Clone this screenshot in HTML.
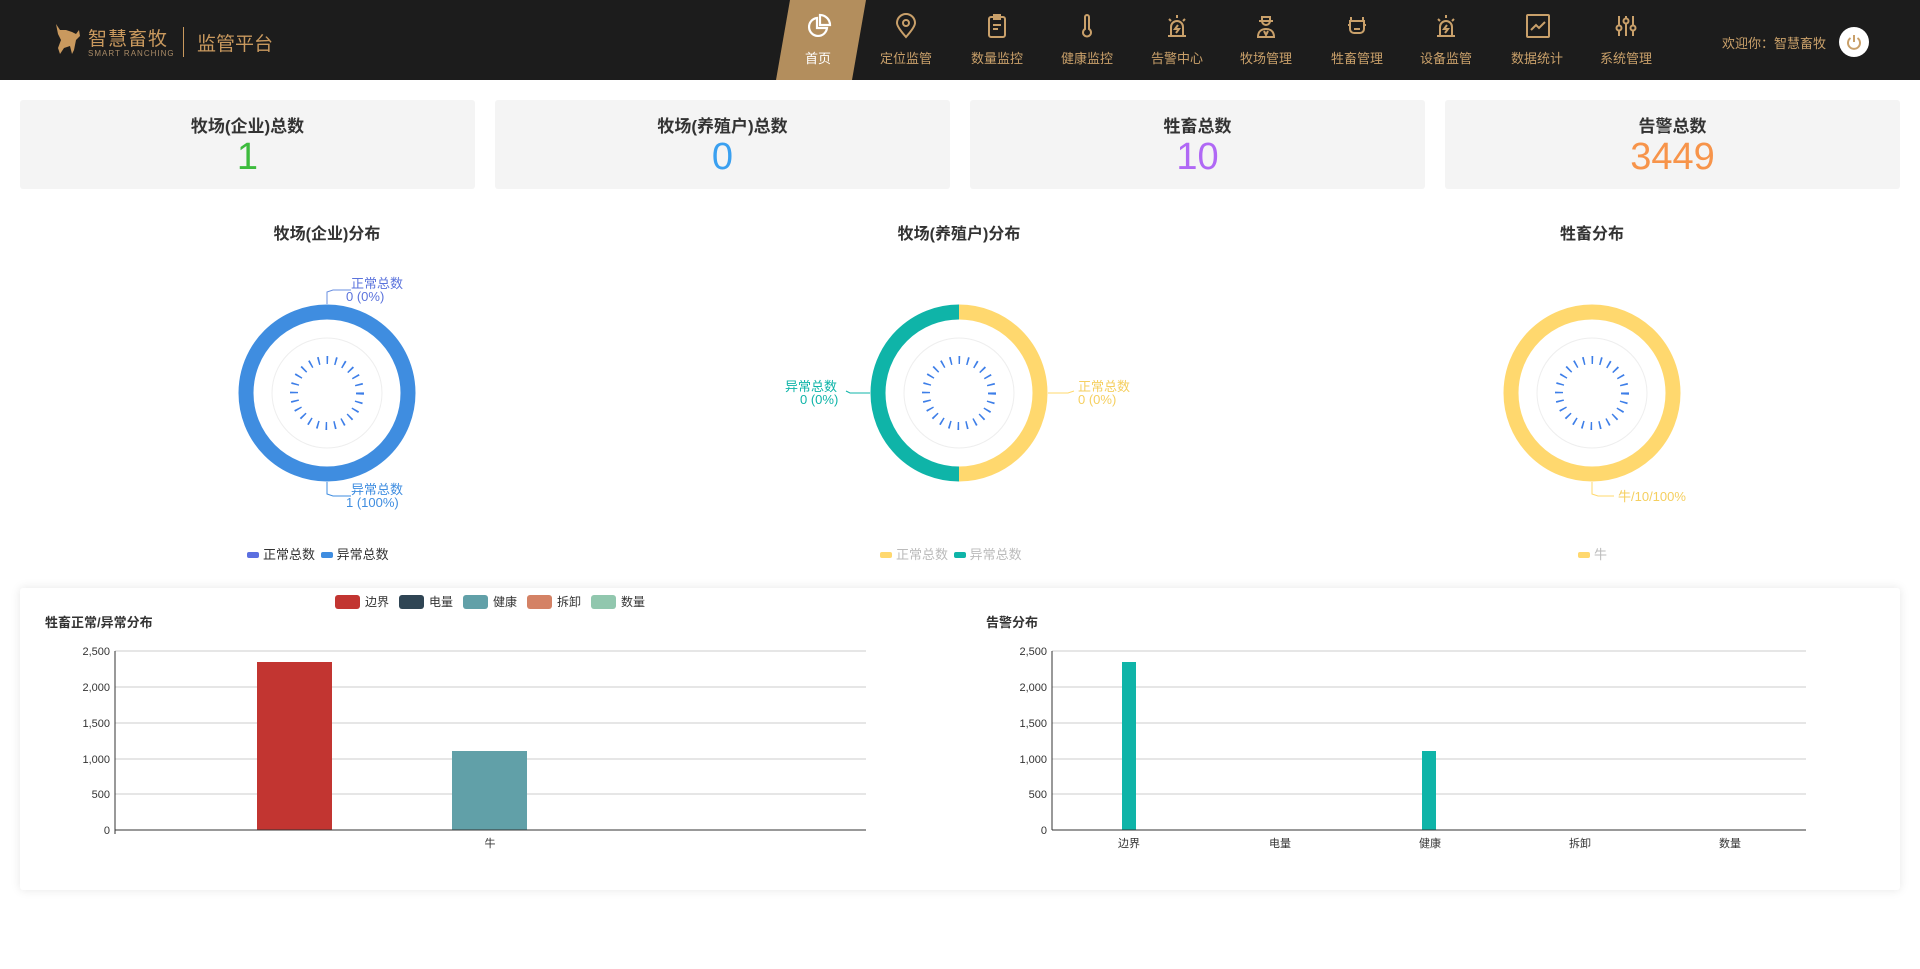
<!DOCTYPE html>
<html><head><meta charset="utf-8"><style>
*{margin:0;padding:0;box-sizing:border-box}
body{width:1920px;height:969px;background:#fff;font-family:"Liberation Sans","Noto Sans CJK SC",sans-serif;position:relative;overflow:hidden;color:#333}
.hdr{position:absolute;left:0;top:0;width:1920px;height:80px;background:#1c1c1c}
.a{position:absolute}
.nav{position:absolute;top:0;height:80px;width:90px;text-align:center;color:#c9a06a;font-size:13px}
.nav svg{position:absolute;left:33px;top:13px}
.nav span{position:absolute;left:0;width:100%;top:48px}
.card{position:absolute;top:100px;width:455px;height:89px;background:#f4f4f4;border-radius:3px;text-align:center}
.card .t{font-size:17px;font-weight:bold;color:#333;margin-top:12px}
.card .n{font-size:38px;line-height:40px;margin-top:0}
.ct{position:absolute;top:220px;font-size:16px;font-weight:bold;color:#333;width:300px;text-align:center}
.lg{position:absolute;top:544px;font-size:13px}
.mk{display:inline-block;width:12px;height:6px;border-radius:2px;vertical-align:middle;margin:0 4px 2px 0}
</style></head><body>
<div class="hdr"></div>
<svg class="a" style="left:52px;top:22px" width="32" height="34" viewBox="0 0 32 34"><path d="M4 2 L8 8 L14 8 L20 10 L24 12 L27 8 L28 14 L24 18 L22 28 L20 32 L18 24 L12 26 L8 32 L6 26 L9 18 L6 12 Z" fill="#c9995e"/></svg>
<div class="a" style="left:88px;top:24px;font-size:19px;color:#c9995e;letter-spacing:1px">智慧畜牧</div>
<div class="a" style="left:88px;top:49px;font-size:8px;color:#a88a66;letter-spacing:1px">SMART RANCHING</div>
<div class="a" style="left:183px;top:27px;width:1px;height:30px;background:#c9995e"></div>
<div class="a" style="left:197px;top:29px;font-size:19px;color:#c9995e">监管平台</div>
<svg class="a" style="left:770px;top:0" width="96" height="80"><polygon points="20,0 96,0 82,80 6,80" fill="#b38e5d"/></svg>
<div class="nav" style="left:773px;color:#fff"><svg width="26" height="26" viewBox="0 0 26 26" fill="none" stroke="#fff" stroke-width="2.2"><path d="M11 5 A9 9 0 1 0 21 15 L11 15 Z"/><path d="M14 2 L14 12 L24 12 A10 10 0 0 0 14 2Z"/></svg><span>首页</span></div>
<div class="nav" style="left:861px"><svg width="24" height="26" viewBox="0 0 24 26" fill="none" stroke="#c9a06a" stroke-width="2"><path d="M12 24 C4 15 3 12 3 10 A9 9 0 0 1 21 10 C21 12 20 15 12 24Z"/><circle cx="12" cy="10" r="3"/></svg><span>定位监管</span></div>
<div class="nav" style="left:952px"><svg width="24" height="26" viewBox="0 0 24 26" fill="none" stroke="#c9a06a" stroke-width="2"><rect x="4" y="4" width="16" height="20" rx="2"/><path d="M9 2h6v4H9z M8 12h8 M8 16h5"/></svg><span>数量监控</span></div>
<div class="nav" style="left:1042px"><svg width="24" height="26" viewBox="0 0 24 26" fill="none" stroke="#c9a06a" stroke-width="2"><path d="M10 4a2 2 0 0 1 4 0v12a4 4 0 1 1-4 0Z"/></svg><span>健康监控</span></div>
<div class="nav" style="left:1132px"><svg width="24" height="26" viewBox="0 0 24 26" fill="none" stroke="#c9a06a" stroke-width="2"><path d="M6 22V14a6 6 0 0 1 12 0v8M3 23h18M12 2v3M4 6l2 2M20 6l-2 2M13 12l-3 4h4l-3 4"/></svg><span>告警中心</span></div>
<div class="nav" style="left:1221px"><svg width="24" height="26" viewBox="0 0 24 26" fill="none" stroke="#c9a06a" stroke-width="2"><path d="M5 8h14M8 8a4 4 0 0 0 8 0V4H8z M4 24c0-6 4-8 8-8s8 2 8 8z M10 18l2 4 2-4"/></svg><span>牧场管理</span></div>
<div class="nav" style="left:1312px"><svg width="24" height="26" viewBox="0 0 24 26" fill="none" stroke="#c9a06a" stroke-width="2"><path d="M6 4v4M18 4v4M5 8h14v8a4 4 0 0 1-4 4H9a4 4 0 0 1-4-4z M3 12h2M19 12h2 M9 16h6"/></svg><span>牲畜管理</span></div>
<div class="nav" style="left:1401px"><svg width="24" height="26" viewBox="0 0 24 26" fill="none" stroke="#c9a06a" stroke-width="2"><path d="M6 22V14a6 6 0 0 1 12 0v8M3 23h18M12 2v3M4 6l2 2M20 6l-2 2M13 12l-3 4h4l-3 4"/></svg><span>设备监管</span></div>
<div class="nav" style="left:1492px"><svg width="26" height="26" viewBox="0 0 26 26" fill="none" stroke="#c9a06a" stroke-width="2"><rect x="2" y="2" width="22" height="22" rx="1"/><path d="M6 17l5-5 3 3 6-6"/></svg><span>数据统计</span></div>
<div class="nav" style="left:1581px"><svg width="24" height="26" viewBox="0 0 24 26" fill="none" stroke="#c9a06a" stroke-width="2"><path d="M5 3v20M12 3v20M19 3v20"/><circle cx="5" cy="15" r="2.5" fill="#1c1c1c"/><circle cx="12" cy="8" r="2.5" fill="#1c1c1c"/><circle cx="19" cy="15" r="2.5" fill="#1c1c1c"/></svg><span>系统管理</span></div>
<div class="a" style="left:1722px;top:33px;font-size:13px;color:#c9a06a">欢迎你：智慧畜牧</div>
<div class="a" style="left:1839px;top:27px;width:30px;height:30px;border-radius:50%;background:#fff"></div>
<svg class="a" style="left:1845px;top:33px" width="18" height="18" viewBox="0 0 18 18" fill="none" stroke="#c9a06a" stroke-width="2"><path d="M5.5 5a6 6 0 1 0 7 0M9 2v7"/></svg>

<div class="card" style="left:20px"><div class="t">牧场(企业)总数</div><div class="n" style="color:#3dbb3d">1</div></div>
<div class="card" style="left:495px"><div class="t">牧场(养殖户)总数</div><div class="n" style="color:#3aa0f0">0</div></div>
<div class="card" style="left:970px"><div class="t">牲畜总数</div><div class="n" style="color:#b068f5">10</div></div>
<div class="card" style="left:1445px"><div class="t">告警总数</div><div class="n" style="color:#f7944a">3449</div></div>

<div class="ct" style="left:177px">牧场(企业)分布</div>
<div class="ct" style="left:809px">牧场(养殖户)分布</div>
<div class="ct" style="left:1442px">牲畜分布</div>

<svg class="a" style="left:0;top:260px" width="1920" height="280" font-family="Liberation Sans,Noto Sans CJK SC,sans-serif" font-size="13">
<g transform="translate(327,133)">
<circle r="81" fill="none" stroke="#3f8de0" stroke-width="15"/>
<circle r="55" fill="none" stroke="#eee" stroke-width="1"/>
<circle r="33" fill="none" stroke="#3d7ee8" stroke-width="8" stroke-dasharray="1.6 7"/>
<circle r="29" fill="#fff"/>
</g>
<path d="M327 44 L327 32 L333 30 L351 30" fill="none" stroke="#6a8fe0"/>
<text x="351" y="28" fill="#5b73dc">正常总数</text><text x="346" y="41" fill="#5b73dc">0 (0%)</text>
<path d="M327 222 L327 234 L333 236 L351 236" fill="none" stroke="#3f8de0"/>
<text x="351" y="234" fill="#3f8de0">异常总数</text><text x="346" y="247" fill="#3f8de0">1 (100%)</text>
<g transform="translate(959,133)">
<path d="M0 -81 A81 81 0 0 1 0 81" fill="none" stroke="#ffd86e" stroke-width="15"/>
<path d="M0 81 A81 81 0 0 1 0 -81" fill="none" stroke="#0fb4a8" stroke-width="15"/>
<circle r="55" fill="none" stroke="#eee"/>
<circle r="33" fill="none" stroke="#3d7ee8" stroke-width="8" stroke-dasharray="1.6 7"/>
<circle r="29" fill="#fff"/>
</g>
<path d="M870 133 L850 133 L846 131" fill="none" stroke="#0fb4a8"/>
<text x="785" y="131" fill="#0fb4a8">异常总数</text><text x="800" y="144" fill="#0fb4a8">0 (0%)</text>
<path d="M1048 133 L1068 133 L1074 131" fill="none" stroke="#ffd86e"/>
<text x="1078" y="131" fill="#f5cf5f">正常总数</text><text x="1078" y="144" fill="#f5cf5f">0 (0%)</text>
<g transform="translate(1592,133)">
<circle r="81" fill="none" stroke="#ffd86e" stroke-width="15"/>
<circle r="55" fill="none" stroke="#eee"/>
<circle r="33" fill="none" stroke="#3d7ee8" stroke-width="8" stroke-dasharray="1.6 7"/>
<circle r="29" fill="#fff"/>
</g>
<path d="M1592 222 L1592 234 L1598 236 L1614 236" fill="none" stroke="#ffd86e"/>
<text x="1618" y="241" fill="#f5cf5f">牛/10/100%</text>
</svg>

<div class="lg" style="left:247px;color:#333"><span class="mk" style="background:#5b6fe0"></span>正常总数 <span class="mk" style="background:#3f8de0;margin-left:2px"></span>异常总数</div>
<div class="lg" style="left:880px;color:#bbb"><span class="mk" style="background:#ffd86e"></span>正常总数 <span class="mk" style="background:#0fb4a8;margin-left:2px"></span>异常总数</div>
<div class="lg" style="left:1578px;color:#bbb"><span class="mk" style="background:#ffd86e"></span>牛</div>

<div class="a" style="left:20px;top:588px;width:1880px;height:302px;background:#fff;box-shadow:0 0 10px rgba(0,0,0,.1);border-radius:3px"></div>
<svg class="a" style="left:0;top:580px" width="1920" height="320" font-family="Liberation Sans,Noto Sans CJK SC,sans-serif" font-size="11" fill="#333">
<g font-size="12">
<rect x="335" y="15" width="25" height="14" rx="3" fill="#c23531"/><text x="365" y="26">边界</text>
<rect x="399" y="15" width="25" height="14" rx="3" fill="#2f4554"/><text x="429" y="26">电量</text>
<rect x="463" y="15" width="25" height="14" rx="3" fill="#61a0a8"/><text x="493" y="26">健康</text>
<rect x="527" y="15" width="25" height="14" rx="3" fill="#d48265"/><text x="557" y="26">拆卸</text>
<rect x="591" y="15" width="25" height="14" rx="3" fill="#91c7ae"/><text x="621" y="26">数量</text>
</g>
<text x="45" y="47" font-size="13" font-weight="bold">牲畜正常/异常分布</text>
<text x="986" y="47" font-size="13" font-weight="bold">告警分布</text>
<g stroke="#ccc">
<line x1="115" y1="71" x2="866" y2="71"/><line x1="115" y1="107" x2="866" y2="107"/><line x1="115" y1="143" x2="866" y2="143"/><line x1="115" y1="179" x2="866" y2="179"/><line x1="115" y1="214" x2="866" y2="214"/>
<line x1="1052" y1="71" x2="1806" y2="71"/><line x1="1052" y1="107" x2="1806" y2="107"/><line x1="1052" y1="143" x2="1806" y2="143"/><line x1="1052" y1="179" x2="1806" y2="179"/><line x1="1052" y1="214" x2="1806" y2="214"/>
</g>
<rect x="257" y="82" width="75" height="168" fill="#c23531"/>
<rect x="452" y="171" width="75" height="79" fill="#61a0a8"/>
<rect x="1122" y="82" width="14" height="168" fill="#0fb4a8"/>
<rect x="1422" y="171" width="14" height="79" fill="#0fb4a8"/>
<g stroke="#333"><line x1="115" y1="250" x2="866" y2="250"/><line x1="115" y1="71" x2="115" y2="254"/><line x1="1052" y1="250" x2="1806" y2="250"/><line x1="1052" y1="71" x2="1052" y2="250"/></g>
<g text-anchor="end">
<text x="110" y="75">2,500</text><text x="110" y="111">2,000</text><text x="110" y="147">1,500</text><text x="110" y="183">1,000</text><text x="110" y="218">500</text><text x="110" y="254">0</text>
<text x="1047" y="75">2,500</text><text x="1047" y="111">2,000</text><text x="1047" y="147">1,500</text><text x="1047" y="183">1,000</text><text x="1047" y="218">500</text><text x="1047" y="254">0</text>
</g>
<g text-anchor="middle"><text x="490" y="267">牛</text>
<text x="1129" y="267">边界</text><text x="1280" y="267">电量</text><text x="1430" y="267">健康</text><text x="1580" y="267">拆卸</text><text x="1730" y="267">数量</text></g>
</svg>
</body></html>
